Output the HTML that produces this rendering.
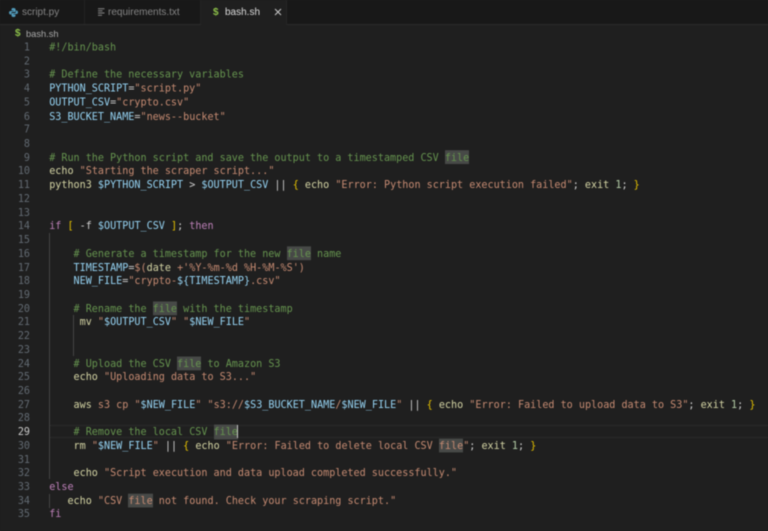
<!DOCTYPE html>
<html><head><meta charset="utf-8"><style>
html,body{margin:0;padding:0;background:#1f1f1f}
#root{position:relative;width:768px;height:531px;overflow:hidden;background:#1f1f1f;filter:blur(.4px)}
.abs{position:absolute}
#tabs{left:0;top:0;width:768px;height:24px;background:#181818;border-bottom:1px solid #2b2b2b}
.tab{position:absolute;top:0;height:24px;border-right:1px solid #232323;font:10px/26px "Liberation Sans",sans-serif;color:#858585;white-space:nowrap}
.tab span{position:absolute;top:0}
#nums,#code{transform:scaleY(1.08);transform-origin:0 0;font:10.12px/12.713px "DejaVu Sans Mono",monospace;white-space:pre}
#nums{left:0;top:42.1px;width:30px;text-align:right;color:#626a72}
#nums b{font-weight:normal;color:#cccccc}
#code{left:49.2px;top:42.1px;color:#d0d0d0}
.c{color:#66944f}.s{color:#c68b72}.v{color:#96d4f4}.f{color:#d4d4a4}.k{color:#bd80b8}.b{color:#e6c200}.n{color:#b5cea8}
.h{background:#474947;display:inline-block;height:11.4px;vertical-align:top;box-shadow:0 -1.8px 0 #474947}
.g{position:absolute;width:1px;background:#444}
</style></head><body><div id="root">
<div class="abs" id="tabs">
<div class="tab" style="left:0;width:84px"><svg class="abs" style="left:9px;top:8px" width="9" height="9" viewBox="0 0 9 9"><path d="M4.5 0C2.8 0 2.5.7 2.5 1.5V2.500H4.600V3H1.500C.5 3 0 3.700 0 4.600S.5 6.500 1.500 6.500H2.300V5.300C2.300 4.500 2.900 4 3.700 4H5.800C6.300 4 6.600 3.600 6.600 3.100V1.500C6.600.6 5.800 0 4.500 0Z" fill="#519aba"/><path d="M4.500 9C6.200 9 6.500 8.300 6.500 7.500V6.500H4.400V6H7.500C8.500 6 9 5.300 9 4.400S8.500 2.500 7.500 2.500H6.900V3.700C6.900 4.500 6.300 5 5.500 5H3.300C2.800 5 2.500 5.400 2.500 5.900V7.500C2.500 8.400 3.200 9 4.500 9Z" fill="#519aba"/></svg><span style="left:22px">script.py</span></div>
<div class="tab" style="left:85px;width:115px"><svg class="abs" style="left:13px;top:8px" width="7" height="8" viewBox="0 0 7 8"><path d="M0 .7H6.500M0 2.900H4.500M0 5H6.500M0 7.200H4" stroke="#858585" stroke-width="1" fill="none"/></svg><span style="left:23px">requirements.txt</span></div>
<div class="tab" style="left:201px;width:86px;height:25px;background:#1f1f1f;color:#dcdcdc;border-right:1px solid #262626;box-sizing:border-box"><span style="left:12px;color:#8dc149;font-weight:bold;font-size:10px">$</span><span style="left:24px">bash.sh</span><svg class="abs" style="left:73px;top:8px" width="8" height="8" viewBox="0 0 8 8"><path d="M1 1L7 7M7 1L1 7" stroke="#c8c8c8" stroke-width="1" fill="none"/></svg></div>
</div>
<div class="abs" style="left:15px;top:27px;font:bold 10px/13px 'Liberation Sans',sans-serif;color:#8dc149">$</div>
<div class="abs" style="left:26px;top:27.6px;font:9.3px/13px 'Liberation Sans',sans-serif;color:#a8a8a8">bash.sh</div>
<div class="abs" style="left:49px;top:425px;width:719px;height:11px;border-top:1px solid #2a2a2a;border-bottom:1px solid #2a2a2a"></div>
<div class="g" style="left:49px;top:233px;height:246px"></div>
<div class="g" style="left:73px;top:315px;height:41px"></div>
<div class="g" style="left:49px;top:494px;height:14px"></div>
<div class="abs" id="nums">1
2
3
4
5
6
7
8
9
10
11
12
13
14
15
16
17
18
19
20
21
22
23
24
25
26
27
28
<b>29</b>
30
31
32
33
34
35</div>
<div class="abs" id="code"><span class="c">#!/bin/bash</span>

<span class="c"># Define the necessary variables</span>
<span class="v">PYTHON_SCRIPT</span>=<span class="s">"script.py"</span>
<span class="v">OUTPUT_CSV</span>=<span class="s">"crypto.csv"</span>
<span class="v">S3_BUCKET_NAME</span>=<span class="s">"news--bucket"</span>


<span class="c"># Run the Python script and save the output to a timestamped CSV <span class="h">file</span></span>
<span class="f">echo</span> <span class="s">"Starting the scraper script..."</span>
<span class="f">python3</span> <span class="v">$PYTHON_SCRIPT</span> &gt; <span class="v">$OUTPUT_CSV</span> || <span class="b">{</span> <span class="f">echo</span> <span class="s">"Error: Python script execution failed"</span>; <span class="f">exit</span> <span class="n">1</span>; <span class="b">}</span>


<span class="k">if</span> <span class="b">[</span> -f <span class="v">$OUTPUT_CSV</span> <span class="b">]</span>; <span class="k">then</span>

    <span class="c"># Generate a timestamp for the new <span class="h">file</span> name</span>
    <span class="v">TIMESTAMP</span>=<span class="s">$(</span><span class="f">date</span> <span class="s">+'%Y-%m-%d %H-%M-%S')</span>
    <span class="v">NEW_FILE</span>=<span class="s">"crypto-</span><span class="v">${TIMESTAMP}</span><span class="s">.csv"</span>

    <span class="c"># Rename the <span class="h">file</span> with the timestamp</span>
     <span class="f">mv</span> <span class="s">"</span><span class="v">$OUTPUT_CSV</span><span class="s">"</span> <span class="s">"</span><span class="v">$NEW_FILE</span><span class="s">"</span>


    <span class="c"># Upload the CSV <span class="h">file</span> to Amazon S3</span>
    <span class="f">echo</span> <span class="s">"Uploading data to S3..."</span>

    <span class="f">aws</span> <span class="s">s3 cp</span> <span class="s">"</span><span class="v">$NEW_FILE</span><span class="s">"</span> <span class="s">"s3://</span><span class="v">$S3_BUCKET_NAME</span><span class="s">/</span><span class="v">$NEW_FILE</span><span class="s">"</span> || <span class="b">{</span> <span class="f">echo</span> <span class="s">"Error: Failed to upload data to S3"</span>; <span class="f">exit</span> <span class="n">1</span>; <span class="b">}</span>

    <span class="c"># Remove the local CSV <span class="h">file</span></span>
    <span class="f">rm</span> <span class="s">"</span><span class="v">$NEW_FILE</span><span class="s">"</span> || <span class="b">{</span> <span class="f">echo</span> <span class="s">"Error: Failed to delete local CSV <span class="h">file</span>"</span>; <span class="f">exit</span> <span class="n">1</span>; <span class="b">}</span>

    <span class="f">echo</span> <span class="s">"Script execution and data upload completed successfully."</span>
<span class="k">else</span>
   <span class="f">echo</span> <span class="s">"CSV <span class="h">file</span> not found. Check your scraping script."</span>
<span class="k">fi</span></div>
<div class="abs" style="left:237px;top:425px;width:1px;height:13px;background:#c8c8c8"></div>
</div></body></html>
